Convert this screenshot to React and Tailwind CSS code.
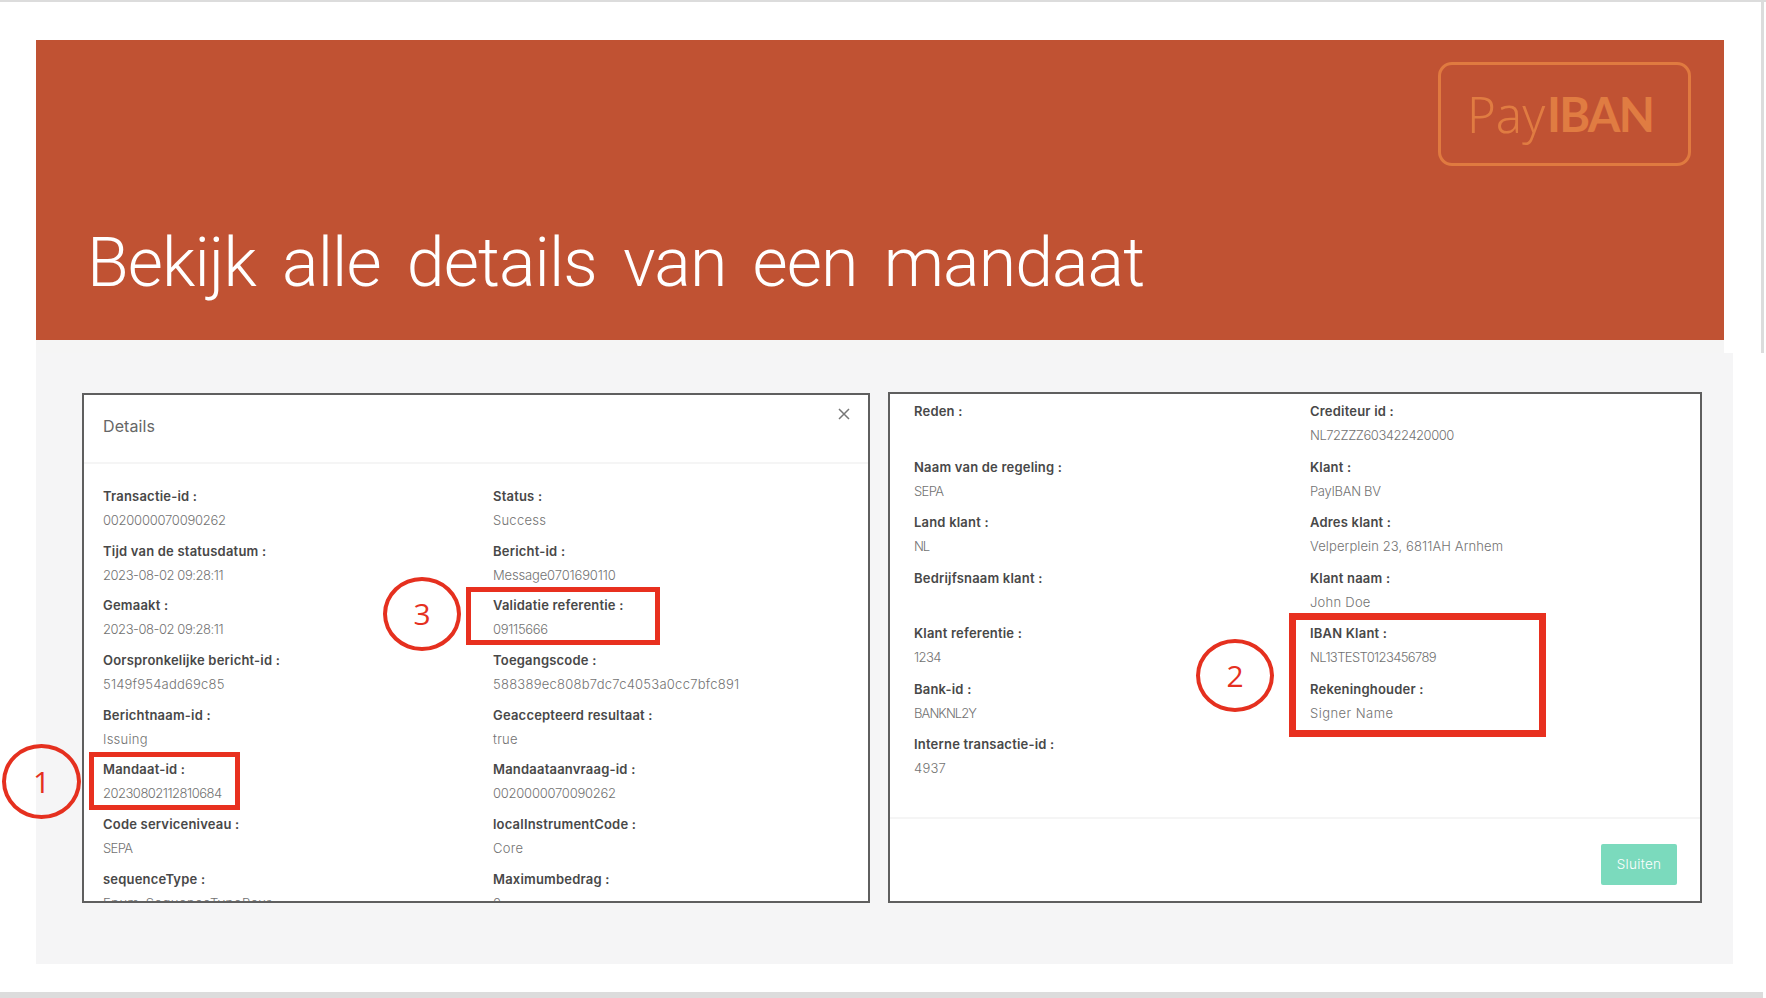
const UI = "font-['Inter','Noto_Sans',sans-serif]";

const leftFields = [
  [["Transactie-id :", "0020000070090262", "tracking-[-0.24px]"], ["Status :", "Success"]],
  [["Tijd van de statusdatum :", "2023-08-02 09:28:11", "tracking-[-0.45px]"], ["Bericht-id :", "Message0701690110", "tracking-[-0.15px]"]],
  [["Gemaakt :", "2023-08-02 09:28:11", "tracking-[-0.45px]"], ["Validatie referentie :", "09115666", "tracking-[-0.3px]"]],
  [["Oorspronkelijke bericht-id :", "5149f954add69c85", "tracking-[0.2px]"], ["Toegangscode :", "588389ec808b7dc7c4053a0cc7bfc891"]],
  [["Berichtnaam-id :", "Issuing"], ["Geaccepteerd resultaat :", "true"]],
  [["Mandaat-id :", "20230802112810684", "tracking-[-0.5px]"], ["Mandaataanvraag-id :", "0020000070090262", "tracking-[-0.24px]"]],
  [["Code serviceniveau :", "SEPA", "tracking-[-0.6px]"], ["localInstrumentCode :", "Core"]],
  [["sequenceType :", "Enum_SequenceTypeRcur", "tracking-[0.5px]"], ["Maximumbedrag :", "0"]],
];

const rightFields = [
  [["Reden :", ""], ["Crediteur id :", "NL72ZZZ603422420000", "tracking-[-0.46px]"]],
  [["Naam van de regeling :", "SEPA", "tracking-[-0.6px]"], ["Klant :", "PayIBAN BV", "tracking-[-0.3px]"]],
  [["Land klant :", "NL", "tracking-[-1px]"], ["Adres klant :", "Velperplein 23, 6811AH Arnhem", "tracking-[0.1px]"]],
  [["Bedrijfsnaam klant :", ""], ["Klant naam :", "John Doe"]],
  [["Klant referentie :", "1234", "tracking-[-0.6px]"], ["IBAN Klant :", "NL13TEST0123456789", "tracking-[-0.62px]"]],
  [["Bank-id :", "BANKNL2Y", "tracking-[-0.9px]"], ["Rekeninghouder :", "Signer Name", "tracking-[0.45px]"]],
  [["Interne transactie-id :", "4937"], null],
];

function Field({ f, h }) {
  if (!f) return <div />;
  return (
    <div className={h}>
      <div className="h-6 whitespace-nowrap text-[13px] leading-6 font-semibold tracking-[0.2px] text-[#484848]">{f[0]}</div>
      <div className={`h-6 whitespace-nowrap text-[13px] leading-6 font-light text-[#727272] ${f[2] || "tracking-[0.25px]"}`}>{f[1]}</div>
    </div>
  );
}

function Ring({ className, n }) {
  return (
    <div className={`absolute flex items-center justify-center rounded-[50%] border-[4.5px] border-[#e5301f] font-['Open_Sans',sans-serif] text-[30px] leading-none font-medium text-[#e5301f] ${className}`}>
      {n}
    </div>
  );
}

function Frame({ className }) {
  return <div className={`absolute border-[#e8301f] ${className}`} />;
}

export default function App() {
  return (
    <div className={`relative flex h-[998px] w-[1766px] flex-col overflow-hidden bg-white ${UI}`}>
      <div className="h-[2px] shrink-0 bg-[#dcdcdc]" />
      <div className="ml-9 mt-[38px] flex h-[300px] w-[1688px] shrink-0 flex-col justify-between bg-[#c05233]">
        <div className="mr-[33px] mt-[22px] flex h-[104px] w-[253px] items-center self-end rounded-[14px] border-[3px] border-[#e07a40] pl-[26px] font-['Noto_Sans',sans-serif] text-[49px] leading-none text-[#e07c42]">
          <span className="font-light">Pay</span><span className="ml-[2px] font-['Lato',sans-serif] text-[47px] font-bold tracking-[-1.8px]">IBAN</span>
        </div>
        <h1 className="mb-[37px] ml-[51px] whitespace-nowrap font-['Roboto',sans-serif] text-[68px] leading-[80px] font-light tracking-[-0.9px] text-white [word-spacing:10.5px]">
          Bekijk alle details van een mandaat
        </h1>
      </div>
      <div className="ml-9 h-[13px] w-[1688px] shrink-0 bg-[#f5f5f5]" />
      <div className="ml-9 flex h-[611px] w-[1697px] shrink-0 items-start gap-[18px] bg-[#f5f5f6] pl-[46px] pt-[40px]">
        <section className="flex h-[510px] w-[788px] flex-col overflow-hidden border-2 border-[#5f5f5f] bg-white">
          <header className="flex h-[69px] shrink-0 items-start justify-between border-b-2 border-[#f5f5f5] pl-[19px] pr-[18px]">
            <span className="mt-[19px] text-[16px] leading-6 tracking-[0.1px] text-[#666]">Details</span>
            <svg className="mt-[13px]" width="12" height="12" viewBox="0 0 12 12" stroke="#777" strokeWidth="1.5" fill="none">
              <path d="M1 1l10 10M11 1L1 11" />
            </svg>
          </header>
          <div className="grid grid-cols-[390px_1fr] pl-[19px] pt-5">
            {leftFields.flat().map((f, i) => <Field key={i} f={f} h="h-[54.7px]" />)}
          </div>
        </section>
        <section className="flex h-[511px] w-[814px] -translate-y-px flex-col overflow-hidden border-2 border-[#5f5f5f] bg-white">
          <div className="grid h-[425px] shrink-0 grid-cols-[396px_1fr] content-start border-b-2 border-[#f5f5f5] pl-6 pt-[5px]">
            {rightFields.flat().map((f, i) => <Field key={i} f={f} h="h-[55.5px]" />)}
          </div>
          <footer className="flex flex-1 items-start justify-end pr-[23px] pt-[25px]">
            <button className="h-[41px] w-[76px] rounded-[2px] bg-[#7bdabd] text-[13.5px] font-light tracking-[0.3px] text-white">Sluiten</button>
          </footer>
        </section>
      </div>
      <div className="mt-auto h-[6px] w-[1763px] shrink-0 bg-[#dcdcdc]" />

      <div className="absolute right-[2px] top-0 h-[353px] w-[3px] bg-[#dcdcdc]" />
      <Frame className="left-[89px] top-[752px] h-[58px] w-[151px] border-[5.5px]" />
      <Frame className="left-[466px] top-[587px] h-[58px] w-[194px] border-[5.5px]" />
      <Frame className="left-[1289px] top-[613px] h-[124px] w-[257px] border-[7.5px]" />
      <Ring className="left-[2px] top-[744px] h-[75px] w-[79px]" n="1" />
      <Ring className="left-[383px] top-[577px] h-[74px] w-[78px]" n="3" />
      <Ring className="left-[1196px] top-[639px] h-[73px] w-[78px]" n="2" />
    </div>
  );
}
